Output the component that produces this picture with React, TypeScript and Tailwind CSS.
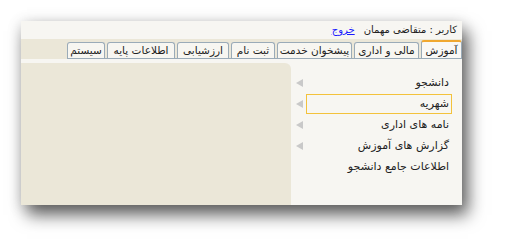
import React from "react";

const tabs = [
  { label: "آموزش", w: 41, active: true },
  { label: "مالی و اداری", w: 65 },
  { label: "پیشخوان خدمت", w: 75 },
  { label: "ثبت نام", w: 44 },
  { label: "ارزشیابی", w: 52 },
  { label: "اطلاعات پایه", w: 68 },
  { label: "سیستم", w: 38 },
];

const items = [
  { label: "دانشجو", arrow: true },
  { label: "شهریه", arrow: true, sel: true },
  { label: "نامه های اداری", arrow: true },
  { label: "گزارش های آموزش", arrow: true },
  { label: "اطلاعات جامع دانشجو", arrow: false },
];

function Arrow() {
  return (
    <svg width="7" height="8" viewBox="0 0 7 8" className="block">
      <polygon points="0,4 7,0 7,8" fill="#c9c9c9" />
    </svg>
  );
}

export default function App() {
  return (
    <div className="bg-white w-[505px] h-[247px] p-[21px]" style={{ fontFamily: '"DejaVu Sans", Tahoma, sans-serif' }}>
      <div dir="rtl" className="w-[441px] h-[184px] flex flex-col bg-[#f7f6f2] shadow-[6px_10px_16px_rgba(0,0,0,0.6),0_2px_14px_rgba(0,0,0,0.15)] text-[#222]">
        <div className="h-[18px] flex items-center pr-[5px] text-[10px] leading-none">
          <span>کاربر : متقاضی مهمان</span>
          <a className="mr-[9px] text-[#1a1aff] underline">خروج</a>
        </div>
        <div className="h-[20px] bg-[#ebe7d8] flex items-end">
          <div className="flex items-end gap-[2px] border-b border-[#9aabb8] h-[19px]">
            {tabs.map((t) =>
              t.active ? (
                <div
                  key={t.label}
                  style={{ width: t.w }}
                  className="h-[18px] shrink-0 flex items-center justify-center bg-[#f9f8f5] border-x border-[#9aabb8] border-t-[2px] border-t-[#f0a830] rounded-t-[3px] text-[10.5px] leading-none whitespace-nowrap"
                >
                  {t.label}
                </div>
              ) : (
                <div
                  key={t.label}
                  style={{ width: t.w }}
                  className="h-[16px] shrink-0 flex items-center justify-center bg-[#f7f6f1] border-x border-t border-[#9aabb8] rounded-t-[3px] text-[10.5px] leading-none whitespace-nowrap"
                >
                  {t.label}
                </div>
              )
            )}
          </div>
        </div>
        <div className="flex flex-1">
          <div className="w-[171px] shrink-0 pt-[13px]">
            {items.map((it) => (
              <div key={it.label} className="h-[21px] flex items-center">
                <div
                  className={
                    "mr-[10px] w-[146px] h-[20px] flex items-center pr-[2px] text-[11px] leading-none whitespace-nowrap " +
                    (it.sel ? "border border-[#f3c23c]" : "border border-transparent")
                  }
                >
                  {it.label}
                </div>
                <div className="mr-[3px]">{it.arrow ? <Arrow /> : null}</div>
              </div>
            ))}
          </div>
          <div className="flex-1 pt-[4px] flex">
            <div className="flex-1 bg-[#ebe7d8] rounded-tr-[6px]" />
          </div>
        </div>
      </div>
    </div>
  );
}
